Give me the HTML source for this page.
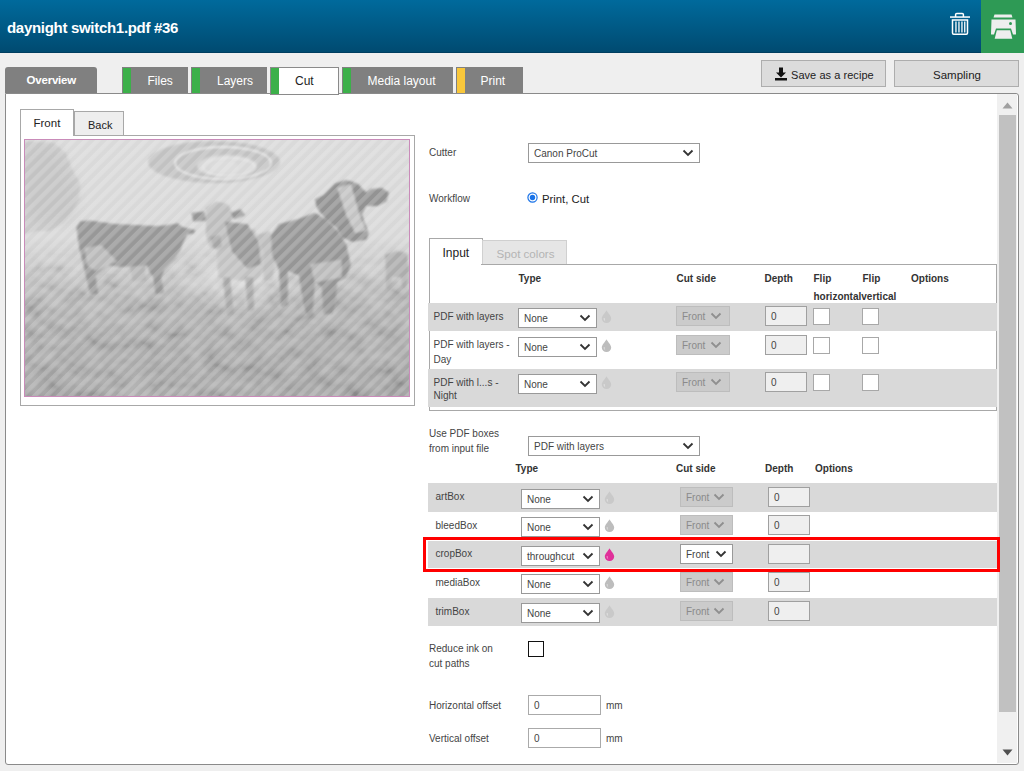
<!DOCTYPE html><html><head><meta charset="utf-8"><style>
html,body{margin:0;padding:0;width:1024px;height:771px;overflow:hidden;background:#efefef;font-family:"Liberation Sans", sans-serif}
.t{position:absolute;white-space:nowrap}.r{position:absolute}
</style></head><body>
<div class="r" style="left:0px;top:0px;width:1024px;height:53px;background:linear-gradient(#006a9c,#004a70)"></div>
<div class="r" style="left:0px;top:52px;width:1024px;height:1px;background:#003e60"></div>
<div class="t" style="left:7px;top:20.00px;font-size:15px;line-height:15px;color:#fff;font-weight:bold;letter-spacing:-0.3px">daynight switch1.pdf #36</div>
<svg class="r" style="left:949px;top:12px" width="22" height="24" viewBox="0 0 22 24"><path d="M6.6 5 V2.6 Q6.6 1.4 7.8 1.4 H13.2 Q14.4 1.4 14.4 2.6 V5" fill="none" stroke="#fff" stroke-width="1.5"/><rect x="1" y="4.3" width="20" height="1.5" fill="#fff"/><path d="M3.5 8 H18.5 V21 Q18.5 22.2 17.3 22.2 H4.7 Q3.5 22.2 3.5 21 Z" fill="none" stroke="#fff" stroke-width="1.5"/><rect x="6.3" y="9.5" width="1.3" height="11" fill="#fff"/><rect x="9.3" y="9.5" width="1.3" height="11" fill="#fff"/><rect x="12.3" y="9.5" width="1.3" height="11" fill="#fff"/><rect x="15.1" y="9.5" width="1.3" height="11" fill="#fff"/></svg>
<div class="r" style="left:981px;top:0px;width:43px;height:53px;background:#2e9a55"></div>
<svg class="r" style="left:990px;top:14px" width="27" height="26" viewBox="0 0 27 26"><path d="M4.5 0.5 H21.5 L22.5 3.5 H3.5 Z" fill="#eee"/><path d="M1.5 5.5 H25.5 L26 20 Q26 20.5 25.5 20.5 H23 L21 14.5 H6 L4 20.5 H1.5 Q1 20.5 1 20 Z" fill="#eee"/><circle cx="20.5" cy="9.5" r="1.5" fill="#2e9a55"/><path d="M6.8 16.3 H20.2 L22.3 24.8 H4.7 Z" fill="#eee"/></svg>
<div class="r" style="left:5px;top:67px;width:92px;height:26px;background:#808080;border-radius:3px 3px 0 0"></div>
<div class="t" style="left:26.5px;top:75.00px;font-size:11.5px;line-height:11.5px;color:#fff;font-weight:bold;letter-spacing:-0.2px">Overview</div>
<div class="r" style="left:122px;top:67px;width:66px;height:26px;background:#808080"></div>
<div class="r" style="left:123px;top:68px;width:8px;height:25px;background:#3cb04a"></div>
<div class="t" style="left:147.5px;top:75.00px;font-size:12px;line-height:12px;color:#fff;font-weight:normal;">Files</div>
<div class="r" style="left:191px;top:67px;width:76px;height:26px;background:#808080"></div>
<div class="r" style="left:192px;top:68px;width:8px;height:25px;background:#3cb04a"></div>
<div class="t" style="left:217px;top:75.00px;font-size:12px;line-height:12px;color:#fff;font-weight:normal;">Layers</div>
<div class="r" style="left:270px;top:67px;width:67px;height:26px;background:#fff;border:1px solid #8a8a8a"></div>
<div class="r" style="left:271px;top:68px;width:8px;height:26px;background:#3cb04a"></div>
<div class="t" style="left:295px;top:75.00px;font-size:12px;line-height:12px;color:#222;font-weight:normal;">Cut</div>
<div class="r" style="left:342px;top:67px;width:111px;height:26px;background:#808080"></div>
<div class="r" style="left:343px;top:68px;width:8px;height:25px;background:#3cb04a"></div>
<div class="t" style="left:367.5px;top:75.00px;font-size:12px;line-height:12px;color:#fff;font-weight:normal;">Media layout</div>
<div class="r" style="left:456px;top:67px;width:67px;height:26px;background:#808080"></div>
<div class="r" style="left:457px;top:68px;width:8px;height:25px;background:#f9c73a"></div>
<div class="t" style="left:480.5px;top:75.00px;font-size:12px;line-height:12px;color:#fff;font-weight:normal;">Print</div>
<div class="r" style="left:761px;top:60px;width:123px;height:25px;background:#dcdcdc;border:1px solid #adadad"></div>
<svg class="r" style="left:774px;top:67px" width="14" height="14" viewBox="0 0 14 14"><path d="M5 0.5 H9 V5.5 H12 L7 10.5 L2 5.5 H5 Z" fill="#111"/><rect x="1" y="11" width="12" height="2.5" fill="#111"/></svg>
<div class="t" style="left:791px;top:70.00px;font-size:11px;line-height:11px;color:#222;font-weight:normal;letter-spacing:0.05px">Save as a recipe</div>
<div class="r" style="left:894px;top:60px;width:123px;height:25px;background:#dcdcdc;border:1px solid #adadad"></div>
<div class="t" style="left:933px;top:70.00px;font-size:11.5px;line-height:11.5px;color:#222;font-weight:normal;">Sampling</div>
<div class="r" style="left:5px;top:93px;width:1012px;height:670px;background:#fff;border:1px solid #8a8a8a;border-radius:0 3px 3px 3px"></div>
<div class="r" style="left:270px;top:67px;width:67px;height:26px;background:#fff;border:1px solid #8a8a8a"></div>
<div class="r" style="left:271px;top:68px;width:8px;height:26px;background:#3cb04a"></div>
<div class="t" style="left:295px;top:75.00px;font-size:12px;line-height:12px;color:#222;font-weight:normal;">Cut</div>
<div class="r" style="left:997px;top:94px;width:20px;height:669px;background:#f0f0f0"></div>
<svg class="r" style="left:1002px;top:102px" width="11" height="7" viewBox="0 0 11 7"><path d="M0.5 6.5 L5.5 0.5 L10.5 6.5Z" fill="#a0a0a0"/></svg>
<div class="r" style="left:999px;top:115px;width:17px;height:597px;background:#c1c1c1"></div>
<svg class="r" style="left:1002px;top:749px" width="11" height="7" viewBox="0 0 11 7"><path d="M0.5 0.5 L5.5 6.5 L10.5 0.5Z" fill="#505050"/></svg>
<div class="r" style="left:20px;top:109px;width:52px;height:27px;background:#fff;border:1px solid #a8a8a8;border-bottom:none"></div>
<div class="t" style="left:33.5px;top:118.00px;font-size:11.5px;line-height:11.5px;color:#222;font-weight:normal;">Front</div>
<div class="r" style="left:74px;top:111px;width:48px;height:25px;background:#eeeeee;border:1px solid #a8a8a8;border-bottom:none"></div>
<div class="t" style="left:88px;top:120.00px;font-size:11px;line-height:11px;color:#222;font-weight:normal;">Back</div>
<div class="r" style="left:20px;top:135px;width:393px;height:269px;background:#fff;border:1px solid #a8a8a8"></div>
<div class="r" style="left:21px;top:135px;width:52px;height:1px;background:#fff"></div>
<svg class="r" style="left:24px;top:139px" width="386" height="258" viewBox="0 0 386 258">
<defs>
<linearGradient id="sky" x1="0" y1="0" x2="0" y2="1">
<stop offset="0" stop-color="#dadada"/><stop offset="0.38" stop-color="#d8d8d8"/><stop offset="0.5" stop-color="#cbcbcb"/><stop offset="0.62" stop-color="#b3b3b3"/><stop offset="1" stop-color="#9f9f9f"/>
</linearGradient>
<radialGradient id="glow" cx="0.5" cy="0.5" r="0.5"><stop offset="0" stop-color="#e2e2e2" stop-opacity="0.9"/><stop offset="1" stop-color="#e2e2e2" stop-opacity="0"/></radialGradient>
<pattern id="st" width="8.5" height="8.5" patternUnits="userSpaceOnUse" patternTransform="rotate(45)">
<rect x="0" y="0" width="4.4" height="8.5" fill="#fff" fill-opacity="0.19"/>
</pattern>
<filter id="bl" x="-20%" y="-20%" width="140%" height="140%"><feGaussianBlur stdDeviation="0.9"/></filter>
<filter id="bl3" x="-30%" y="-30%" width="160%" height="160%"><feGaussianBlur stdDeviation="4"/></filter>
<filter id="noise" x="0" y="0" width="100%" height="100%"><feTurbulence type="fractalNoise" baseFrequency="0.05 0.08" numOctaves="3" seed="7"/><feColorMatrix type="matrix" values="1.8 0 0 0 -0.4  1.8 0 0 0 -0.4  1.8 0 0 0 -0.4  0 0 0 0 1"/><feGaussianBlur stdDeviation="1"/></filter>
<linearGradient id="gmg" x1="0" y1="0" x2="0" y2="1"><stop offset="0" stop-color="#000"/><stop offset="0.25" stop-color="#fff"/><stop offset="1" stop-color="#fff"/></linearGradient><mask id="gm" maskUnits="userSpaceOnUse" x="0" y="100" width="386" height="158"><rect y="100" width="386" height="158" fill="url(#gmg)"/></mask>
</defs>
<rect width="386" height="258" fill="url(#sky)"/>
<g filter="url(#bl3)">
<ellipse cx="215" cy="140" rx="70" ry="35" fill="url(#glow)"/>
<ellipse cx="70" cy="215" rx="70" ry="22" fill="#aaaaaa" opacity="0.6"/>
<ellipse cx="320" cy="215" rx="70" ry="22" fill="#a9a9a9" opacity="0.6"/>
<ellipse cx="150" cy="250" rx="100" ry="14" fill="#adadad" opacity="0.6"/>
</g>
<rect y="100" width="386" height="158" filter="url(#noise)" opacity="0.15" mask="url(#gm)"/>
<!-- tree -->
<g filter="url(#bl3)" fill="#c9c9c9"><ellipse cx="20" cy="45" rx="26" ry="40"/><ellipse cx="36" cy="58" rx="18" ry="26"/></g>
<g filter="url(#bl)" fill="#c0c0c0" opacity="0.6">
<path d="M0 2 L30 4 L42 14 L48 30 L56 44 L55 60 L48 72 L40 84 L26 92 L12 92 L0 96Z"/>
</g>

<!-- UFO -->
<g filter="url(#bl)">
<ellipse cx="190" cy="23" rx="66" ry="21" fill="#c2c2c2"/>
<ellipse cx="199" cy="24" rx="48" ry="16" fill="none" stroke="#f2f2f2" stroke-width="1.3"/>
<ellipse cx="203" cy="27" rx="30" ry="11" fill="#d8d8d8"/><ellipse cx="205" cy="28" rx="26" ry="9" fill="none" stroke="#ececec" stroke-width="1"/>
<ellipse cx="200" cy="28" rx="14" ry="7" fill="#dcdcdc"/>
</g>
<g filter="url(#bl)">
<!-- faint background cows -->
<path d="M226 98 L246 92 L252 118 L248 142 L240 142 L238 125 L230 125 L228 142 L222 140Z" fill="#bdbdbd"/>
<path d="M106 126 L120 124 L122 142 L108 142Z" fill="#b5b5b5"/>
<!-- cow1 -->
<path fill="#989898" d="M52.4 88.3 L56.5 82.2 L66.1 81.5 L90.7 84.9 L131.7 87 L142.6 86.3 L153.6 84.2 L159.1 88.3 L171.4 91.1 L170 94.5 L163.2 95.2 L159.1 103.4 L156.3 111.6 L150.8 119.8 L139.9 130.7 L137.2 138.9 L139.9 154 L131.7 155.3 L129 137.6 L124.9 132.1 L123.5 126.6 L97.5 128 L83.9 126.6 L71.5 137.6 L74.3 155.3 L66.1 155.3 L62 137.6 L57.9 119.8 L55.1 108.9Z"/>
<path fill="#b9b9b9" d="M60.6 108.9 L77 106.1 L93.4 122.5 L71.5 132.1 L63.3 126.6Z"/>

<!-- cow2 -->
<path fill="#c2c2c2" d="M191.9 98.4 L230.1 89.4 L241.4 116.4 L236.9 136.6 L230.1 143.3 L194.2 138.8Z"/>
<path fill="#bdbdbd" d="M181.8 69.2 L191.9 62.4 L203.2 64.7 L208.8 73.7 L206.5 89.4 L204.3 107.4 L196.4 111.9 L185.2 107.4 L181.8 96.1Z"/>
<path fill="#969696" d="M167.2 73.7 L180.7 72.6 L181.8 81.5 L169.5 82.7Z M206.5 73.7 L216.6 70.3 L221.1 75.9 L209.9 80.4Z"/>
<path fill="#9a9a9a" d="M200.9 82.7 L223.4 84.9 L234.6 102.9 L236.9 125.3 L223.4 129.8 L207.7 111.9Z"/>
<path fill="#a8a8a8" d="M198.7 138 L206 138 L209.9 174.8 L203 175Z M221.1 138 L229 138 L230.1 172 L224 172Z"/>
<path fill="#a6a6a6" d="M186 98 L196 96 L198 108 L190 110Z"/>
<!-- cow3 -->
<path fill="#969696" d="M247 96.1 L254.8 84.9 L272.8 80.4 L290.8 73.7 L302 80.4 L313.2 91.6 L322.2 105.1 L326.7 125.3 L322.2 138.8 L313.2 143.3 L311 165.8 L308.7 174.8 L299.8 174.8 L297.5 147.8 L290.8 143.3 L288.5 177 L284 179.2 L279.5 165.8 L275 136.6 L263.8 132.1 L263.8 165.8 L257.1 168 L254.8 129.8 L248.1 116.4Z"/>
<path fill="#939393" d="M290.8 60.2 L299.8 55.7 L311 44.5 L322.2 41.1 L333.5 44.5 L342.4 53.5 L346.9 50.1 L358.2 49 L364.9 53.5 L362.6 62.4 L353.7 66.9 L342.4 66.9 L338 75.9 L344.7 93.9 L342.4 100.6 L329 102.9 L317.7 98.4 L313.2 89.4 L302 80.4 L293 69.2Z"/>
<path fill="#c4c4c4" d="M313.2 49 L326.7 44.5 L335.7 75.9 L342.4 91.6 L331.2 93.9 L322.2 75.9Z"/>
<path fill="#bababa" d="M286.3 125.3 L317.7 120.8 L317.7 138.8 L290.8 143.3Z"/>
<!-- small cow -->
<path fill="#adadad" d="M361 116 L372 112 L383 114 L385 132 L382 150 L378 150 L377 138 L368 138 L366 150 L362 150 L362 132Z"/>
</g>
<rect width="386" height="258" fill="url(#st)"/>
<rect x="0.5" y="0.5" width="385" height="257" fill="none" stroke="#c98bb9" stroke-width="1"/>
</svg>

<div class="t" style="left:429px;top:148.00px;font-size:10px;line-height:10px;color:#444;font-weight:normal;">Cutter</div>
<div class="r" style="left:528px;top:143px;width:170px;height:18px;background:#fff;border:1px solid #999"></div>
<div class="t" style="left:534px;top:149.00px;font-size:10px;line-height:10px;color:#444;font-weight:normal;">Canon ProCut</div>
<svg class="r" style="left:681.5px;top:148.5px" width="12" height="8" viewBox="0 0 12 8"><path d="M1.5 1.5 L6 6 L10.5 1.5" fill="none" stroke="#333" stroke-width="1.8"/></svg>
<div class="t" style="left:429px;top:194.00px;font-size:10px;line-height:10px;color:#444;font-weight:normal;">Workflow</div>
<svg class="r" style="left:527px;top:192px" width="11" height="11" viewBox="0 0 11 11"><circle cx="5.5" cy="5.5" r="4.6" fill="#fff" stroke="#1a73e8" stroke-width="1.2"/><circle cx="5.5" cy="5.5" r="2.7" fill="#1a73e8"/></svg>
<div class="t" style="left:542px;top:194.00px;font-size:11.3px;line-height:11.3px;color:#222;font-weight:normal;">Print, Cut</div>
<div class="r" style="left:429px;top:238px;width:52px;height:27px;background:#fff;border:1px solid #a8a8a8;border-bottom:none"></div>
<div class="t" style="left:442.5px;top:247.00px;font-size:12px;line-height:12px;color:#222;font-weight:normal;">Input</div>
<div class="r" style="left:482px;top:240px;width:83px;height:25px;background:#e6e6e6;border:1px solid #d0d0d0;border-bottom:none"></div>
<div class="t" style="left:496.5px;top:248.00px;font-size:11.6px;line-height:11.6px;color:#b4b4b4;font-weight:normal;">Spot colors</div>
<div class="r" style="left:429px;top:264px;width:566px;height:145px;background:#fff;border:1px solid #a8a8a8"></div>
<div class="r" style="left:430px;top:264px;width:51px;height:1px;background:#fff"></div>
<div class="t" style="left:518.5px;top:274.00px;font-size:10px;line-height:10px;color:#333;font-weight:bold;">Type</div>
<div class="t" style="left:676.5px;top:274.00px;font-size:10px;line-height:10px;color:#333;font-weight:bold;">Cut side</div>
<div class="t" style="left:764.5px;top:274.00px;font-size:10px;line-height:10px;color:#333;font-weight:bold;">Depth</div>
<div class="t" style="left:813.5px;top:274.00px;font-size:10px;line-height:10px;color:#333;font-weight:bold;">Flip</div>
<div class="t" style="left:862.5px;top:274.00px;font-size:10px;line-height:10px;color:#333;font-weight:bold;">Flip</div>
<div class="t" style="left:911px;top:274.00px;font-size:10px;line-height:10px;color:#333;font-weight:bold;">Options</div>
<div class="t" style="left:813.5px;top:292.00px;font-size:10px;line-height:10px;color:#333;font-weight:bold;">horizontalvertical</div>
<div class="r" style="left:428px;top:303px;width:569px;height:28px;background:#d9d9d9"></div>
<div class="r" style="left:428px;top:369px;width:569px;height:38px;background:#d9d9d9"></div>
<div class="t" style="left:433.5px;top:312.00px;font-size:10px;line-height:10px;color:#444;font-weight:normal;">PDF with layers</div>
<div class="r" style="left:518px;top:308px;width:77px;height:18px;background:#fff;border:1px solid #999"></div>
<div class="t" style="left:524px;top:314.00px;font-size:10px;line-height:10px;color:#444;font-weight:normal;">None</div>
<svg class="r" style="left:578.5px;top:313.5px" width="12" height="8" viewBox="0 0 12 8"><path d="M1.5 1.5 L6 6 L10.5 1.5" fill="none" stroke="#333" stroke-width="1.8"/></svg>
<svg class="r" style="left:600.5px;top:310px" width="11" height="13" viewBox="0 0 11 13"><path d="M5.5 0.3 C6.5 2.5 10.2 6 10.2 8.6 A4.7 4.4 0 0 1 0.8 8.6 C0.8 6 4.5 2.5 5.5 0.3Z" fill="#c9c9c9"/><path d="M2.6 8.2 Q2.4 10.8 4.6 11.6 Q3.2 10.2 3.6 8 Z" fill="#fff" fill-opacity="0.55"/></svg>
<div class="r" style="left:676px;top:306px;width:52px;height:18px;background:#cbcbcb;border:1px solid #bdbdbd"></div>
<div class="t" style="left:682px;top:312.00px;font-size:10px;line-height:10px;color:#8a8a8a;font-weight:normal;">Front</div>
<svg class="r" style="left:710px;top:311.5px" width="12" height="8" viewBox="0 0 12 8"><path d="M1.5 1.5 L6 6 L10.5 1.5" fill="none" stroke="#8f8f8f" stroke-width="1.8"/></svg>
<div class="r" style="left:765px;top:306px;width:40px;height:18px;background:#efefef;border:1px solid #a0a0a0"></div>
<div class="t" style="left:771px;top:312.00px;font-size:10px;line-height:10px;color:#444;font-weight:normal;">0</div>
<div class="r" style="left:813px;top:308px;width:17px;height:17px;background:#fff;border:1px solid #a8a8a8;box-sizing:border-box"></div>
<div class="r" style="left:862px;top:308px;width:17px;height:17px;background:#fff;border:1px solid #a8a8a8;box-sizing:border-box"></div>
<div class="t" style="left:433.5px;top:340.00px;font-size:10px;line-height:10px;color:#444;font-weight:normal;">PDF with layers -</div>
<div class="t" style="left:433.5px;top:355.00px;font-size:10px;line-height:10px;color:#444;font-weight:normal;">Day</div>
<div class="r" style="left:518px;top:337px;width:77px;height:18px;background:#fff;border:1px solid #999"></div>
<div class="t" style="left:524px;top:343.00px;font-size:10px;line-height:10px;color:#444;font-weight:normal;">None</div>
<svg class="r" style="left:578.5px;top:342.5px" width="12" height="8" viewBox="0 0 12 8"><path d="M1.5 1.5 L6 6 L10.5 1.5" fill="none" stroke="#333" stroke-width="1.8"/></svg>
<svg class="r" style="left:600.5px;top:339px" width="11" height="13" viewBox="0 0 11 13"><path d="M5.5 0.3 C6.5 2.5 10.2 6 10.2 8.6 A4.7 4.4 0 0 1 0.8 8.6 C0.8 6 4.5 2.5 5.5 0.3Z" fill="#bdbdbd"/><path d="M2.6 8.2 Q2.4 10.8 4.6 11.6 Q3.2 10.2 3.6 8 Z" fill="#fff" fill-opacity="0.55"/></svg>
<div class="r" style="left:676px;top:335px;width:52px;height:18px;background:#cbcbcb;border:1px solid #bdbdbd"></div>
<div class="t" style="left:682px;top:341.00px;font-size:10px;line-height:10px;color:#8a8a8a;font-weight:normal;">Front</div>
<svg class="r" style="left:710px;top:340.5px" width="12" height="8" viewBox="0 0 12 8"><path d="M1.5 1.5 L6 6 L10.5 1.5" fill="none" stroke="#8f8f8f" stroke-width="1.8"/></svg>
<div class="r" style="left:765px;top:335px;width:40px;height:18px;background:#efefef;border:1px solid #a0a0a0"></div>
<div class="t" style="left:771px;top:341.00px;font-size:10px;line-height:10px;color:#444;font-weight:normal;">0</div>
<div class="r" style="left:813px;top:337px;width:17px;height:17px;background:#fff;border:1px solid #a8a8a8;box-sizing:border-box"></div>
<div class="r" style="left:862px;top:337px;width:17px;height:17px;background:#fff;border:1px solid #a8a8a8;box-sizing:border-box"></div>
<div class="t" style="left:433.5px;top:378.00px;font-size:10px;line-height:10px;color:#444;font-weight:normal;">PDF with l...s -</div>
<div class="t" style="left:433.5px;top:391.00px;font-size:10px;line-height:10px;color:#444;font-weight:normal;">Night</div>
<div class="r" style="left:518px;top:374px;width:77px;height:18px;background:#fff;border:1px solid #999"></div>
<div class="t" style="left:524px;top:380.00px;font-size:10px;line-height:10px;color:#444;font-weight:normal;">None</div>
<svg class="r" style="left:578.5px;top:379.5px" width="12" height="8" viewBox="0 0 12 8"><path d="M1.5 1.5 L6 6 L10.5 1.5" fill="none" stroke="#333" stroke-width="1.8"/></svg>
<svg class="r" style="left:600.5px;top:376px" width="11" height="13" viewBox="0 0 11 13"><path d="M5.5 0.3 C6.5 2.5 10.2 6 10.2 8.6 A4.7 4.4 0 0 1 0.8 8.6 C0.8 6 4.5 2.5 5.5 0.3Z" fill="#c9c9c9"/><path d="M2.6 8.2 Q2.4 10.8 4.6 11.6 Q3.2 10.2 3.6 8 Z" fill="#fff" fill-opacity="0.55"/></svg>
<div class="r" style="left:676px;top:372px;width:52px;height:18px;background:#cbcbcb;border:1px solid #bdbdbd"></div>
<div class="t" style="left:682px;top:378.00px;font-size:10px;line-height:10px;color:#8a8a8a;font-weight:normal;">Front</div>
<svg class="r" style="left:710px;top:377.5px" width="12" height="8" viewBox="0 0 12 8"><path d="M1.5 1.5 L6 6 L10.5 1.5" fill="none" stroke="#8f8f8f" stroke-width="1.8"/></svg>
<div class="r" style="left:765px;top:372px;width:40px;height:18px;background:#efefef;border:1px solid #a0a0a0"></div>
<div class="t" style="left:771px;top:378.00px;font-size:10px;line-height:10px;color:#444;font-weight:normal;">0</div>
<div class="r" style="left:813px;top:374px;width:17px;height:17px;background:#fff;border:1px solid #a8a8a8;box-sizing:border-box"></div>
<div class="r" style="left:862px;top:374px;width:17px;height:17px;background:#fff;border:1px solid #a8a8a8;box-sizing:border-box"></div>
<div class="t" style="left:429px;top:429.00px;font-size:10px;line-height:10px;color:#444;font-weight:normal;">Use PDF boxes</div>
<div class="t" style="left:429px;top:444.00px;font-size:10px;line-height:10px;color:#444;font-weight:normal;">from input file</div>
<div class="r" style="left:528px;top:436px;width:170px;height:18px;background:#fff;border:1px solid #999"></div>
<div class="t" style="left:534px;top:442.00px;font-size:10px;line-height:10px;color:#444;font-weight:normal;">PDF with layers</div>
<svg class="r" style="left:681.5px;top:441.5px" width="12" height="8" viewBox="0 0 12 8"><path d="M1.5 1.5 L6 6 L10.5 1.5" fill="none" stroke="#333" stroke-width="1.8"/></svg>
<div class="t" style="left:515.5px;top:464.00px;font-size:10px;line-height:10px;color:#333;font-weight:bold;">Type</div>
<div class="t" style="left:676px;top:464.00px;font-size:10px;line-height:10px;color:#333;font-weight:bold;">Cut side</div>
<div class="t" style="left:765px;top:464.00px;font-size:10px;line-height:10px;color:#333;font-weight:bold;">Depth</div>
<div class="t" style="left:815px;top:464.00px;font-size:10px;line-height:10px;color:#333;font-weight:bold;">Options</div>
<div class="r" style="left:428px;top:483px;width:569px;height:29px;background:#d9d9d9"></div>
<div class="r" style="left:428px;top:541px;width:569px;height:27px;background:#d9d9d9"></div>
<div class="r" style="left:428px;top:598px;width:569px;height:28px;background:#d9d9d9"></div>
<div class="t" style="left:435.5px;top:492.00px;font-size:10px;line-height:10px;color:#444;font-weight:normal;">artBox</div>
<div class="r" style="left:521px;top:489px;width:77px;height:18px;background:#fff;border:1px solid #999"></div>
<div class="t" style="left:527px;top:495.00px;font-size:10px;line-height:10px;color:#444;font-weight:normal;">None</div>
<svg class="r" style="left:581.5px;top:494.5px" width="12" height="8" viewBox="0 0 12 8"><path d="M1.5 1.5 L6 6 L10.5 1.5" fill="none" stroke="#333" stroke-width="1.8"/></svg>
<svg class="r" style="left:603.5px;top:491px" width="11" height="13" viewBox="0 0 11 13"><path d="M5.5 0.3 C6.5 2.5 10.2 6 10.2 8.6 A4.7 4.4 0 0 1 0.8 8.6 C0.8 6 4.5 2.5 5.5 0.3Z" fill="#c9c9c9"/><path d="M2.6 8.2 Q2.4 10.8 4.6 11.6 Q3.2 10.2 3.6 8 Z" fill="#fff" fill-opacity="0.55"/></svg>
<div class="r" style="left:680px;top:487px;width:51px;height:18px;background:#cbcbcb;border:1px solid #bdbdbd"></div>
<div class="t" style="left:686px;top:493.00px;font-size:10px;line-height:10px;color:#8a8a8a;font-weight:normal;">Front</div>
<svg class="r" style="left:713px;top:492.5px" width="12" height="8" viewBox="0 0 12 8"><path d="M1.5 1.5 L6 6 L10.5 1.5" fill="none" stroke="#8f8f8f" stroke-width="1.8"/></svg>
<div class="r" style="left:768px;top:487px;width:40px;height:18px;background:#efefef;border:1px solid #a0a0a0"></div>
<div class="t" style="left:774px;top:493.00px;font-size:10px;line-height:10px;color:#444;font-weight:normal;">0</div>
<div class="t" style="left:435.5px;top:521.00px;font-size:10px;line-height:10px;color:#444;font-weight:normal;">bleedBox</div>
<div class="r" style="left:521px;top:517px;width:77px;height:18px;background:#fff;border:1px solid #999"></div>
<div class="t" style="left:527px;top:523.00px;font-size:10px;line-height:10px;color:#444;font-weight:normal;">None</div>
<svg class="r" style="left:581.5px;top:522.5px" width="12" height="8" viewBox="0 0 12 8"><path d="M1.5 1.5 L6 6 L10.5 1.5" fill="none" stroke="#333" stroke-width="1.8"/></svg>
<svg class="r" style="left:603.5px;top:519px" width="11" height="13" viewBox="0 0 11 13"><path d="M5.5 0.3 C6.5 2.5 10.2 6 10.2 8.6 A4.7 4.4 0 0 1 0.8 8.6 C0.8 6 4.5 2.5 5.5 0.3Z" fill="#bdbdbd"/><path d="M2.6 8.2 Q2.4 10.8 4.6 11.6 Q3.2 10.2 3.6 8 Z" fill="#fff" fill-opacity="0.55"/></svg>
<div class="r" style="left:680px;top:515px;width:51px;height:18px;background:#cbcbcb;border:1px solid #bdbdbd"></div>
<div class="t" style="left:686px;top:521.00px;font-size:10px;line-height:10px;color:#8a8a8a;font-weight:normal;">Front</div>
<svg class="r" style="left:713px;top:520.5px" width="12" height="8" viewBox="0 0 12 8"><path d="M1.5 1.5 L6 6 L10.5 1.5" fill="none" stroke="#8f8f8f" stroke-width="1.8"/></svg>
<div class="r" style="left:768px;top:515px;width:40px;height:18px;background:#efefef;border:1px solid #a0a0a0"></div>
<div class="t" style="left:774px;top:521.00px;font-size:10px;line-height:10px;color:#444;font-weight:normal;">0</div>
<div class="t" style="left:435.5px;top:549.00px;font-size:10px;line-height:10px;color:#444;font-weight:normal;">cropBox</div>
<div class="r" style="left:521px;top:546px;width:77px;height:18px;background:#fff;border:1px solid #999"></div>
<div class="t" style="left:527px;top:552.00px;font-size:10px;line-height:10px;color:#444;font-weight:normal;">throughcut</div>
<svg class="r" style="left:581.5px;top:551.5px" width="12" height="8" viewBox="0 0 12 8"><path d="M1.5 1.5 L6 6 L10.5 1.5" fill="none" stroke="#333" stroke-width="1.8"/></svg>
<svg class="r" style="left:603.5px;top:548px" width="11" height="13" viewBox="0 0 11 13"><path d="M5.5 0.3 C6.5 2.5 10.2 6 10.2 8.6 A4.7 4.4 0 0 1 0.8 8.6 C0.8 6 4.5 2.5 5.5 0.3Z" fill="#e0309a"/><path d="M2.6 8.2 Q2.4 10.8 4.6 11.6 Q3.2 10.2 3.6 8 Z" fill="#fff" fill-opacity="0.55"/></svg>
<div class="r" style="left:680px;top:544px;width:51px;height:18px;background:#fff;border:1px solid #999"></div>
<div class="t" style="left:686px;top:550.00px;font-size:10px;line-height:10px;color:#444;font-weight:normal;">Front</div>
<svg class="r" style="left:714.5px;top:549.5px" width="12" height="8" viewBox="0 0 12 8"><path d="M1.5 1.5 L6 6 L10.5 1.5" fill="none" stroke="#333" stroke-width="1.8"/></svg>
<div class="r" style="left:768px;top:544px;width:40px;height:18px;background:#efefef;border:1px solid #a0a0a0"></div>
<div class="t" style="left:435.5px;top:578.00px;font-size:10px;line-height:10px;color:#444;font-weight:normal;">mediaBox</div>
<div class="r" style="left:521px;top:574px;width:77px;height:18px;background:#fff;border:1px solid #999"></div>
<div class="t" style="left:527px;top:580.00px;font-size:10px;line-height:10px;color:#444;font-weight:normal;">None</div>
<svg class="r" style="left:581.5px;top:579.5px" width="12" height="8" viewBox="0 0 12 8"><path d="M1.5 1.5 L6 6 L10.5 1.5" fill="none" stroke="#333" stroke-width="1.8"/></svg>
<svg class="r" style="left:603.5px;top:576px" width="11" height="13" viewBox="0 0 11 13"><path d="M5.5 0.3 C6.5 2.5 10.2 6 10.2 8.6 A4.7 4.4 0 0 1 0.8 8.6 C0.8 6 4.5 2.5 5.5 0.3Z" fill="#bdbdbd"/><path d="M2.6 8.2 Q2.4 10.8 4.6 11.6 Q3.2 10.2 3.6 8 Z" fill="#fff" fill-opacity="0.55"/></svg>
<div class="r" style="left:680px;top:572px;width:51px;height:18px;background:#cbcbcb;border:1px solid #bdbdbd"></div>
<div class="t" style="left:686px;top:578.00px;font-size:10px;line-height:10px;color:#8a8a8a;font-weight:normal;">Front</div>
<svg class="r" style="left:713px;top:577.5px" width="12" height="8" viewBox="0 0 12 8"><path d="M1.5 1.5 L6 6 L10.5 1.5" fill="none" stroke="#8f8f8f" stroke-width="1.8"/></svg>
<div class="r" style="left:768px;top:572px;width:40px;height:18px;background:#efefef;border:1px solid #a0a0a0"></div>
<div class="t" style="left:774px;top:578.00px;font-size:10px;line-height:10px;color:#444;font-weight:normal;">0</div>
<div class="t" style="left:435.5px;top:607.00px;font-size:10px;line-height:10px;color:#444;font-weight:normal;">trimBox</div>
<div class="r" style="left:521px;top:603px;width:77px;height:18px;background:#fff;border:1px solid #999"></div>
<div class="t" style="left:527px;top:609.00px;font-size:10px;line-height:10px;color:#444;font-weight:normal;">None</div>
<svg class="r" style="left:581.5px;top:608.5px" width="12" height="8" viewBox="0 0 12 8"><path d="M1.5 1.5 L6 6 L10.5 1.5" fill="none" stroke="#333" stroke-width="1.8"/></svg>
<svg class="r" style="left:603.5px;top:605px" width="11" height="13" viewBox="0 0 11 13"><path d="M5.5 0.3 C6.5 2.5 10.2 6 10.2 8.6 A4.7 4.4 0 0 1 0.8 8.6 C0.8 6 4.5 2.5 5.5 0.3Z" fill="#c9c9c9"/><path d="M2.6 8.2 Q2.4 10.8 4.6 11.6 Q3.2 10.2 3.6 8 Z" fill="#fff" fill-opacity="0.55"/></svg>
<div class="r" style="left:680px;top:601px;width:51px;height:18px;background:#cbcbcb;border:1px solid #bdbdbd"></div>
<div class="t" style="left:686px;top:607.00px;font-size:10px;line-height:10px;color:#8a8a8a;font-weight:normal;">Front</div>
<svg class="r" style="left:713px;top:606.5px" width="12" height="8" viewBox="0 0 12 8"><path d="M1.5 1.5 L6 6 L10.5 1.5" fill="none" stroke="#8f8f8f" stroke-width="1.8"/></svg>
<div class="r" style="left:768px;top:601px;width:40px;height:18px;background:#efefef;border:1px solid #a0a0a0"></div>
<div class="t" style="left:774px;top:607.00px;font-size:10px;line-height:10px;color:#444;font-weight:normal;">0</div>
<div class="r" style="left:423px;top:537px;width:571px;height:29px;border:3px solid #ff0000"></div>
<div class="t" style="left:429px;top:644.00px;font-size:10px;line-height:10px;color:#444;font-weight:normal;">Reduce ink on</div>
<div class="t" style="left:429px;top:659.00px;font-size:10px;line-height:10px;color:#444;font-weight:normal;">cut paths</div>
<div class="r" style="left:528px;top:641px;width:16px;height:16px;border:1.5px solid #111;box-sizing:border-box;background:#fff"></div>
<div class="t" style="left:429px;top:701.00px;font-size:10px;line-height:10px;color:#444;font-weight:normal;">Horizontal offset</div>
<div class="r" style="left:528px;top:695px;width:71px;height:18px;background:#fff;border:1px solid #aaa"></div>
<div class="t" style="left:534px;top:701.00px;font-size:10px;line-height:10px;color:#444;font-weight:normal;">0</div>
<div class="t" style="left:606px;top:701.00px;font-size:10px;line-height:10px;color:#444;font-weight:normal;">mm</div>
<div class="t" style="left:429px;top:734.00px;font-size:10px;line-height:10px;color:#444;font-weight:normal;">Vertical offset</div>
<div class="r" style="left:528px;top:728px;width:71px;height:18px;background:#fff;border:1px solid #aaa"></div>
<div class="t" style="left:534px;top:734.00px;font-size:10px;line-height:10px;color:#444;font-weight:normal;">0</div>
<div class="t" style="left:606px;top:734.00px;font-size:10px;line-height:10px;color:#444;font-weight:normal;">mm</div>
</body></html>
